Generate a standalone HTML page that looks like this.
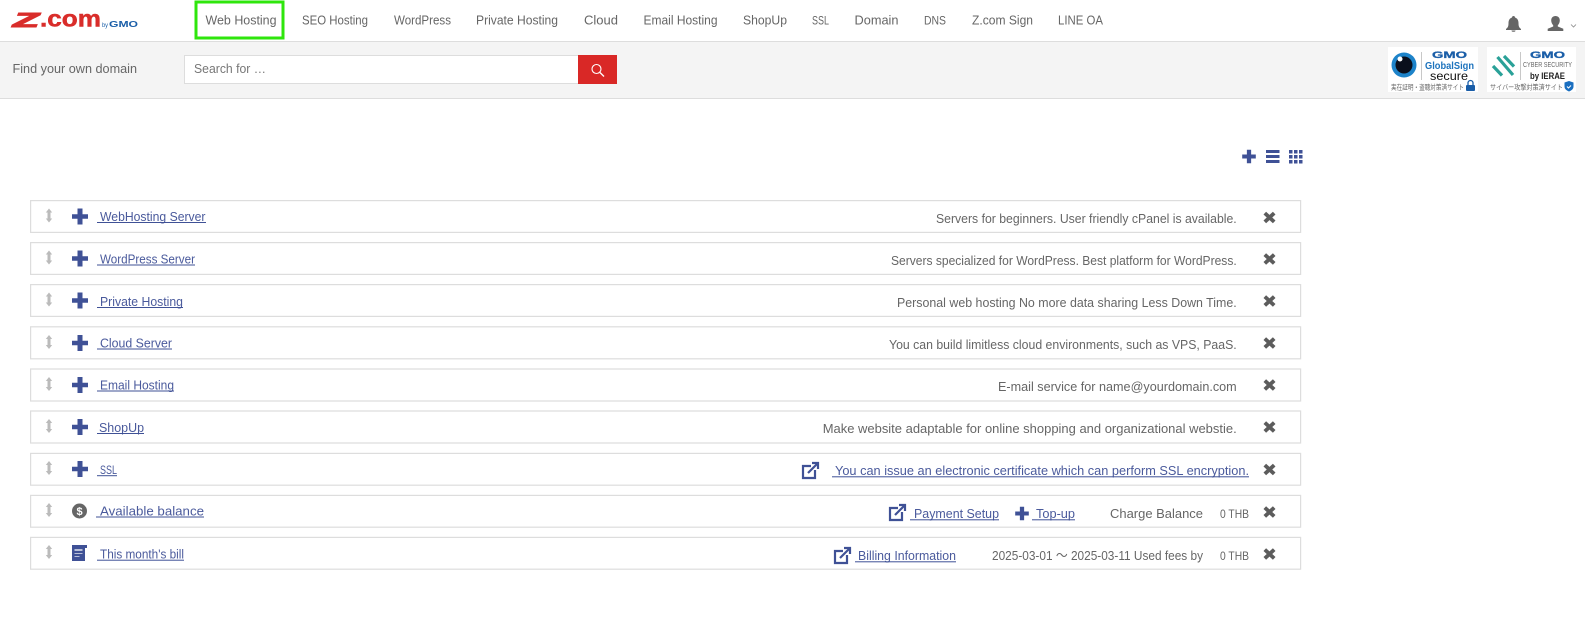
<!DOCTYPE html>
<html lang="en">
<head>
<meta charset="utf-8">
<title>Z.com</title>
<style>
html,body{margin:0;padding:0;background:#fff;width:1585px;height:631px;overflow:hidden}
svg{display:block}
text{font-family:"Liberation Sans","Noto Sans CJK JP",sans-serif;font-size:13px}
.n{fill:#666}
.t{fill:#666}
.l{fill:#4a5a9c}
.u{fill:#3f5196}
.s{font-size:12px}
.jp{font-size:7px;fill:#666}
.row{fill:#fff;stroke:#ddd;stroke-width:1.2}
</style>
</head>
<body>
<svg width="1585" height="631" viewBox="0 0 1585 631" xmlns="http://www.w3.org/2000/svg">
<defs>
<path id="plus" d="M-2.500-8h5v5.700h5.500v4.600h-5.500v5.700h-5v-5.700h-5.500v-4.600h5.500z" fill="#3f5196"/>
<path id="x" d="M-4.700-4.400L4.700 4.400M4.700-4.400L-4.700 4.400" fill="none" stroke="#5c5c5c" stroke-width="3.800"/>
<path id="ud" d="M0-7L3.200-3H1.500v6H3.200L0 7l-3.200-4H-1.500v-6H-3.200z" fill="#bbb"/>
<g id="ext" fill="none" stroke="#3f5196" stroke-width="2.200"><path d="M9 4H1v12h12V8"/><path d="M6 11L15 2"/><path d="M10 1h6v6"/></g>
</defs>

<!-- header -->
<rect x="0" y="41" width="1585" height="1.200" fill="#ddd"/>
<rect x="0" y="42.200" width="1585" height="55.800" fill="#f4f4f4"/>
<rect x="0" y="98" width="1585" height="1" fill="#ddd"/>

<!-- logo -->
<text x="13" y="27" textLength="26" lengthAdjust="spacingAndGlyphs" style="font-size:20px;font-weight:bold;font-style:italic;fill:#d92d2a;stroke:#d92d2a;stroke-width:1.100">Z</text>
<text x="40" y="26.500" textLength="61" lengthAdjust="spacingAndGlyphs" style="font-size:23px;font-weight:bold;fill:#d92d2a;stroke:#d92d2a;stroke-width:.5">.com</text>
<text x="102" y="27" textLength="6" lengthAdjust="spacingAndGlyphs" style="font-size:6px;fill:#1a5ea8">by</text>
<text x="109" y="27" textLength="29" lengthAdjust="spacingAndGlyphs" style="font-size:8px;font-weight:bold;fill:#1a5ea8">GMO</text>

<!-- nav -->
<rect x="196" y="2" width="87" height="36" fill="none" stroke="#2fe60c" stroke-width="3"/>
<text class="n" x="205.500" y="24.500" textLength="71" lengthAdjust="spacingAndGlyphs">Web Hosting</text>
<text class="n" x="302" y="24.500" textLength="66" lengthAdjust="spacingAndGlyphs">SEO Hosting</text>
<text class="n" x="394" y="24.500" textLength="57" lengthAdjust="spacingAndGlyphs">WordPress</text>
<text class="n" x="476" y="24.500" textLength="82" lengthAdjust="spacingAndGlyphs">Private Hosting</text>
<text class="n" x="584" y="24.500" textLength="34" lengthAdjust="spacingAndGlyphs">Cloud</text>
<text class="n" x="643.500" y="24.500" textLength="74" lengthAdjust="spacingAndGlyphs">Email Hosting</text>
<text class="n" x="743" y="24.500" textLength="44" lengthAdjust="spacingAndGlyphs">ShopUp</text>
<text class="n s" x="812" y="24.500" textLength="17" lengthAdjust="spacingAndGlyphs">SSL</text>
<text class="n" x="854.500" y="24.500" textLength="44" lengthAdjust="spacingAndGlyphs">Domain</text>
<text class="n s" x="924" y="24.500" textLength="22" lengthAdjust="spacingAndGlyphs">DNS</text>
<text class="n" x="972" y="24.500" textLength="61" lengthAdjust="spacingAndGlyphs">Z.com Sign</text>
<text class="n" x="1058" y="24.500" textLength="45" lengthAdjust="spacingAndGlyphs">LINE OA</text>

<!-- bell / user -->
<path d="M1513.500 16c1 0 1.500.7 1.500 1.500 2.500.8 3.500 3 3.500 5.500 0 3 .5 4.500 2.500 6v1h-15v-1c2-1.500 2.500-3 2.500-6 0-2.500 1-4.700 3.500-5.500 0-.8.500-1.500 1.500-1.500zM1511.500 30.500h4a2 1.300 0 0 1-4 0z" fill="#666"/>
<path d="M1555.500 16c2.700 0 4.300 1.800 4.300 4.500 0 2-1 3.700-2 4.700v1.300l5.500 2.300V31h-15.600v-2.200l5.500-2.300v-1.300c-1-1-2-2.700-2-4.700 0-2.700 1.600-4.500 4.300-4.500z" fill="#666"/>
<path d="M1571 24.500l2.500 2.500 2.500-2.500" fill="none" stroke="#888" stroke-width=".8"/>

<!-- search -->
<text class="t" x="12.500" y="73" textLength="124.500" lengthAdjust="spacingAndGlyphs">Find your own domain</text>
<rect x="184.500" y="55.500" width="394" height="28" fill="#fff" stroke="#ddd"/>
<text x="194" y="73" textLength="72" lengthAdjust="spacingAndGlyphs" fill="#777">Search for …</text>
<rect x="578" y="55" width="39" height="29" fill="#d92826"/>
<circle cx="596.500" cy="69" r="4.500" fill="none" stroke="#fff" stroke-width="1.100"/>
<path d="M600 72.500l4 4" stroke="#fff" stroke-width="1.300"/>

<!-- badge 1 -->
<rect x="1388" y="47" width="90" height="45" fill="#fff"/>
<circle cx="1404" cy="65" r="12.500" fill="#1d83c9"/>
<circle cx="1404" cy="65" r="8.500" fill="#0a0f1c"/>
<circle cx="1400" cy="59" r="2.500" fill="#fff"/>
<rect x="1421" y="52" width=".8" height="28" fill="#bbb"/>
<text x="1432" y="58" textLength="35" lengthAdjust="spacingAndGlyphs" style="font-size:9.500px;font-weight:bold;fill:#1a5ea8;stroke:#1a5ea8;stroke-width:.3">GMO</text>
<text x="1425" y="69" textLength="49" lengthAdjust="spacingAndGlyphs" style="font-size:10px;font-weight:bold;fill:#1d73bd">GlobalSign</text>
<text x="1430" y="80" textLength="38" lengthAdjust="spacingAndGlyphs" style="font-size:12px;fill:#111">secure</text>
<text class="jp" x="1391" y="89.500" textLength="73" lengthAdjust="spacingAndGlyphs">実在証明・盗聴対策済サイト</text>
<rect x="1466" y="85" width="9" height="6" rx="1" fill="#1a5ea8"/>
<path d="M1468 85v-2a2.500 2.500 0 0 1 5 0v2" fill="none" stroke="#1a5ea8" stroke-width="1.300"/>

<!-- badge 2 -->
<rect x="1487" y="47" width="89" height="45" fill="#fff"/>
<path d="M1504 56l10 10.500M1497.500 57l15.500 18M1493 66l9 9.500" fill="none" stroke="#2aa198" stroke-width="3.200"/>
<rect x="1520" y="52" width=".8" height="28" fill="#bbb"/>
<text x="1530" y="58" textLength="35" lengthAdjust="spacingAndGlyphs" style="font-size:9.500px;font-weight:bold;fill:#1a5ea8;stroke:#1a5ea8;stroke-width:.3">GMO</text>
<text x="1523" y="67" textLength="49" lengthAdjust="spacingAndGlyphs" style="font-size:7px;fill:#666">CYBER SECURITY</text>
<text x="1530" y="79" textLength="35" lengthAdjust="spacingAndGlyphs" style="font-size:9px;font-weight:bold;fill:#222">by IERAE</text>
<text class="jp" x="1490" y="89.500" textLength="73" lengthAdjust="spacingAndGlyphs">サイバー攻撃対策済サイト</text>
<path d="M1569 81l4.500 1.500v4c0 2.500-2 4-4.500 5-2.500-1-4.500-2.500-4.500-5v-4z" fill="#1a6fc0"/>
<path d="M1567 86.500l1.500 1.500 2.500-2.500" fill="none" stroke="#fff" stroke-width="1"/>

<!-- toolbar -->
<use href="#plus" transform="translate(1249 156.500) scale(.85)"/>
<path d="M1266 150h13.500v3H1266zM1266 155h13.500v3H1266zM1266 160h13.500v3H1266z" fill="#3f5196"/>
<g fill="#3f5196"><rect x="1289" y="150" width="3.500" height="3.500"/><rect x="1294" y="150" width="3.500" height="3.500"/><rect x="1299" y="150" width="3.500" height="3.500"/><rect x="1289" y="155" width="3.500" height="3.500"/><rect x="1294" y="155" width="3.500" height="3.500"/><rect x="1299" y="155" width="3.500" height="3.500"/><rect x="1289" y="160" width="3.500" height="3.500"/><rect x="1294" y="160" width="3.500" height="3.500"/><rect x="1299" y="160" width="3.500" height="3.500"/></g>

<!-- rows -->
<rect class="row" x="30.600" y="200.600" width="1270" height="31.800"/>
<rect class="row" x="30.600" y="242.600" width="1270" height="31.800"/>
<rect class="row" x="30.600" y="284.600" width="1270" height="31.800"/>
<rect class="row" x="30.600" y="326.800" width="1270" height="32"/>
<rect class="row" x="30.600" y="369" width="1270" height="32"/>
<rect class="row" x="30.600" y="411" width="1270" height="32"/>
<rect class="row" x="30.600" y="453.400" width="1270" height="31.800"/>
<rect class="row" x="30.600" y="495.400" width="1270" height="31.800"/>
<rect class="row" x="30.600" y="537.400" width="1270" height="31.800"/>

<!-- drag handles -->
<use href="#ud" x="49" y="215.500"/><use href="#ud" x="49" y="257.500"/><use href="#ud" x="49" y="299.500"/><use href="#ud" x="49" y="342"/><use href="#ud" x="49" y="384"/><use href="#ud" x="49" y="426"/><use href="#ud" x="49" y="468"/><use href="#ud" x="49" y="510"/><use href="#ud" x="49" y="552"/>

<!-- row icons -->
<use href="#plus" x="80" y="216.500"/><use href="#plus" x="80" y="258.500"/><use href="#plus" x="80" y="300.500"/><use href="#plus" x="80" y="343"/><use href="#plus" x="80" y="385"/><use href="#plus" x="80" y="427"/><use href="#plus" x="80" y="469"/>
<circle cx="79.500" cy="511" r="7.500" fill="#666"/>
<text x="79.500" y="515" text-anchor="middle" style="font-size:11px;font-weight:bold;fill:#fff">$</text>
<path d="M72 545h15v3h-2v13H72z" fill="#3f5196"/>
<path d="M74.500 549h8v2h-8zM74.500 553h8v1h-8zM74.500 556h5v1h-5z" fill="#b9c0d8"/>

<!-- left links -->
<g class="l">
<text x="100" y="221" textLength="105.500" lengthAdjust="spacingAndGlyphs">WebHosting Server</text>
<text x="100" y="263.500" textLength="95" lengthAdjust="spacingAndGlyphs">WordPress Server</text>
<text x="100" y="306" textLength="83" lengthAdjust="spacingAndGlyphs">Private Hosting</text>
<text x="100" y="347.500" textLength="72" lengthAdjust="spacingAndGlyphs">Cloud Server</text>
<text x="100" y="389.500" textLength="74" lengthAdjust="spacingAndGlyphs">Email Hosting</text>
<text x="99" y="432" textLength="45" lengthAdjust="spacingAndGlyphs">ShopUp</text>
<text class="s" x="100" y="474" textLength="17" lengthAdjust="spacingAndGlyphs">SSL</text>
<text x="100" y="515.500" textLength="104" lengthAdjust="spacingAndGlyphs">Available balance</text>
<text x="100" y="558.500" textLength="84" lengthAdjust="spacingAndGlyphs">This month's bill</text>
</g>
<g class="u">
<rect x="97" y="222" width="109" height="1"/>
<rect x="97" y="264.500" width="98" height="1"/>
<rect x="97" y="307" width="86" height="1"/>
<rect x="97" y="348.500" width="75" height="1"/>
<rect x="97" y="390.500" width="77" height="1"/>
<rect x="97" y="433" width="47" height="1"/>
<rect x="97" y="475.200" width="20" height="1"/>
<rect x="96" y="516.500" width="108" height="1"/>
<rect x="97" y="559.700" width="87" height="1"/>
</g>

<!-- right text -->
<g class="t">
<text x="936" y="223" textLength="300.700" lengthAdjust="spacingAndGlyphs">Servers for beginners. User friendly cPanel is available.</text>
<text x="891" y="265" textLength="345.700" lengthAdjust="spacingAndGlyphs">Servers specialized for WordPress. Best platform for WordPress.</text>
<text x="897" y="307" textLength="339.700" lengthAdjust="spacingAndGlyphs">Personal web hosting No more data sharing Less Down Time.</text>
<text x="889" y="349" textLength="347.700" lengthAdjust="spacingAndGlyphs">You can build limitless cloud environments, such as VPS, PaaS.</text>
<text x="998" y="391" textLength="238.700" lengthAdjust="spacingAndGlyphs">E-mail service for name@yourdomain.com</text>
<text x="822.700" y="433" textLength="414" lengthAdjust="spacingAndGlyphs">Make website adaptable for online shopping and organizational webstie.</text>
<text x="1110" y="518" textLength="93" lengthAdjust="spacingAndGlyphs">Charge Balance</text>
<text class="s" x="1220" y="518" textLength="29" lengthAdjust="spacingAndGlyphs">0 THB</text>
<text x="992" y="560" textLength="211" lengthAdjust="spacingAndGlyphs">2025-03-01 ～ 2025-03-11 Used fees by</text>
<text class="s" x="1220" y="560" textLength="29" lengthAdjust="spacingAndGlyphs">0 THB</text>
</g>

<!-- right links -->
<use href="#ext" x="802" y="462"/>
<text class="l" x="835" y="475" textLength="414" lengthAdjust="spacingAndGlyphs">You can issue an electronic certificate which can perform SSL encryption.</text>
<rect class="u" x="832" y="476.300" width="417" height="1"/>
<use href="#ext" x="889" y="504"/>
<text class="l" x="914" y="518" textLength="85" lengthAdjust="spacingAndGlyphs">Payment Setup</text>
<rect class="u" x="910" y="519.300" width="89" height="1"/>
<use href="#plus" transform="translate(1022 513.500) scale(.85)"/>
<text class="l" x="1036" y="518" textLength="39" lengthAdjust="spacingAndGlyphs">Top-up</text>
<rect class="u" x="1032" y="519.300" width="43" height="1"/>
<use href="#ext" x="834" y="547"/>
<text class="l" x="858" y="560" textLength="98" lengthAdjust="spacingAndGlyphs">Billing Information</text>
<rect class="u" x="855" y="561.300" width="101" height="1"/>

<!-- close icons -->
<use href="#x" x="1269.500" y="217.500"/><use href="#x" x="1269.500" y="259"/><use href="#x" x="1269.500" y="301"/><use href="#x" x="1269.500" y="343"/><use href="#x" x="1269.500" y="385"/><use href="#x" x="1269.500" y="427"/><use href="#x" x="1269.500" y="469.500"/><use href="#x" x="1269.500" y="512"/><use href="#x" x="1269.500" y="554"/>
</svg>
</body>
</html>
